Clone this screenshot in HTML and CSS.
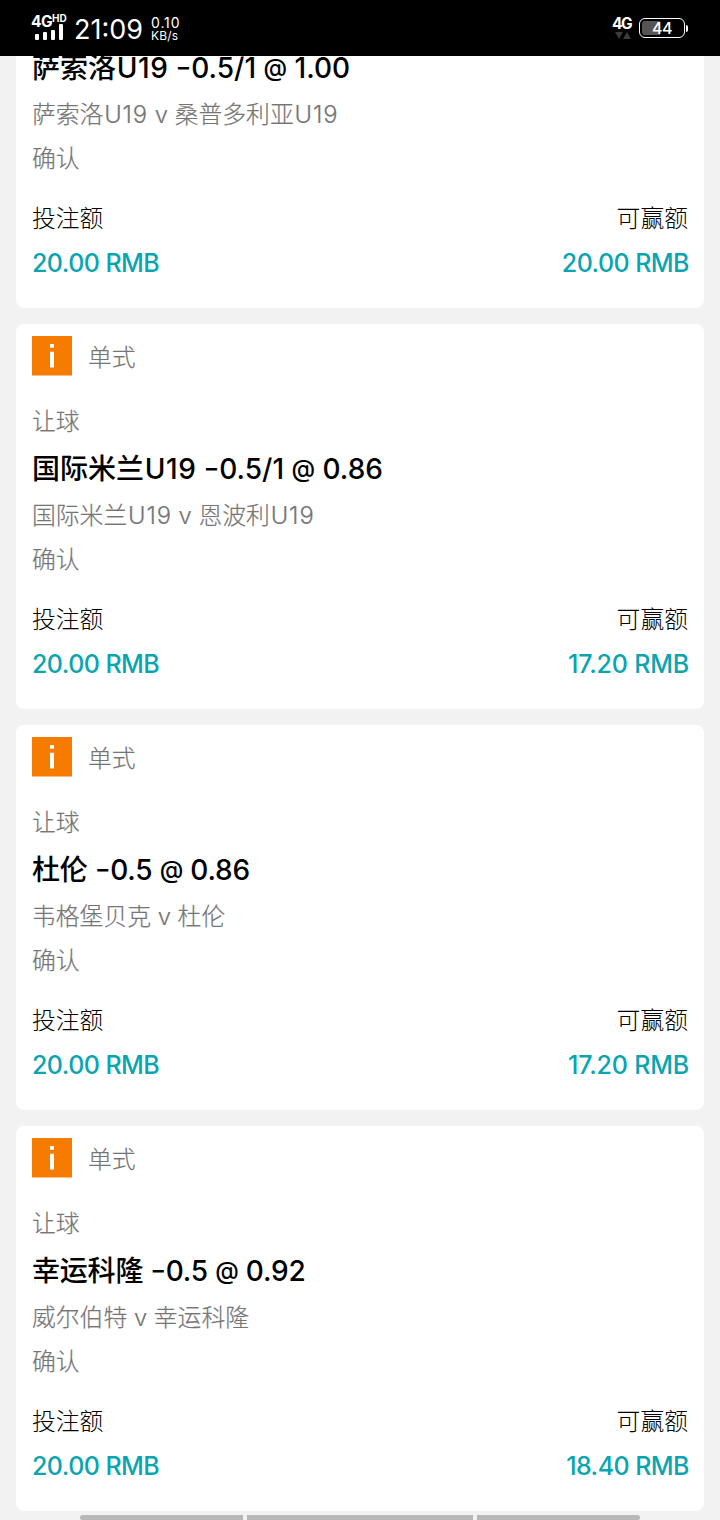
FILE: index.html
```html
<!DOCTYPE html>
<html lang="zh-CN">
<head>
<meta charset="utf-8">
<title>注单</title>
<link rel="stylesheet" href="styles.css">
</head>
<body>
<header class="status">
  <div class="signal">
    <div class="net"><span>4G</span><span class="hd">HD</span></div>
    <svg class="bars" width="29" height="17" viewBox="0 0 29 17"><g fill="#fff"><rect x="0" y="11" width="4" height="6" rx="1"/><rect x="8" y="9" width="4" height="8" rx="1"/><rect x="16" y="7" width="4" height="10" rx="1"/><rect x="24" y="1" width="4" height="16" rx="1"/></g></svg>
  </div>
  <div class="clock">21:09</div>
  <div class="speed"><span class="rate">0.10</span><span class="unit">KB/s</span></div>
  <div class="sim"><span>4G</span><svg width="16" height="8" viewBox="0 0 16 8"><path d="M0 0H8L4 7ZM8 7L12 0L16 7Z" fill="#3c3c3c"/></svg></div>
  <div class="battery"><div class="case"><div class="level">44</div></div><div class="cap"></div></div>
</header>
<main class="list">
  <section class="card card-cut">
    <h2 class="pick wide">萨索洛<span class="team">U19</span> <span class="minus">−</span>0.5/1 <span class="at">@</span> 1.00</h2>
    <p class="match">萨索洛<span class="team">U19</span> v 桑普多利亚<span class="team">U19</span></p>
    <p class="state">确认</p>
    <div class="labels"><span>投注额</span><span>可赢额</span></div>
    <div class="amounts"><span>20.00 RMB</span><span>20.00 RMB</span></div>
  </section>
  <section class="card">
    <div class="head"><svg class="info" width="40" height="40" viewBox="0 0 40 40"><path d="M0 0H40V39.5H0Z" fill="#f57c00"/><path d="M18 8H22V11.7H18ZM18 15.8H22V31.5H18Z" fill="#fff"/></svg><span>单式</span></div>
    <p class="type">让球</p>
    <h2 class="pick wide">国际米兰<span class="team">U19</span> <span class="minus">−</span>0.5/1 <span class="at">@</span> 0.86</h2>
    <p class="match">国际米兰<span class="team">U19</span> v 恩波利<span class="team">U19</span></p>
    <p class="state">确认</p>
    <div class="labels"><span>投注额</span><span>可赢额</span></div>
    <div class="amounts"><span>20.00 RMB</span><span class="loose">17.20 RMB</span></div>
  </section>
  <section class="card">
    <div class="head"><svg class="info" width="40" height="40" viewBox="0 0 40 40"><path d="M0 0H40V39.5H0Z" fill="#f57c00"/><path d="M18 8H22V11.7H18ZM18 15.8H22V31.5H18Z" fill="#fff"/></svg><span>单式</span></div>
    <p class="type">让球</p>
    <h2 class="pick">杜伦 <span class="minus">−</span>0.5 <span class="at">@</span> 0.86</h2>
    <p class="match">韦格堡贝克 v 杜伦</p>
    <p class="state">确认</p>
    <div class="labels"><span>投注额</span><span>可赢额</span></div>
    <div class="amounts"><span>20.00 RMB</span><span class="loose">17.20 RMB</span></div>
  </section>
  <section class="card">
    <div class="head"><svg class="info" width="40" height="40" viewBox="0 0 40 40"><path d="M0 0H40V39.5H0Z" fill="#f57c00"/><path d="M18 8H22V11.7H18ZM18 15.8H22V31.5H18Z" fill="#fff"/></svg><span>单式</span></div>
    <p class="type">让球</p>
    <h2 class="pick">幸运科隆 <span class="minus">−</span>0.5 <span class="at">@</span> 0.92</h2>
    <p class="match">威尔伯特 v 幸运科隆</p>
    <p class="state">确认</p>
    <div class="labels"><span>投注额</span><span>可赢额</span></div>
    <div class="amounts"><span>20.00 RMB</span><span>18.40 RMB</span></div>
  </section>
  <div class="navhint"><i></i><i></i><i></i></div>
</main>
</body>
</html>
```
FILE: styles.css
```css
* { box-sizing: border-box; }
body {
  margin: 0;
  height: 1520px;
  overflow: hidden;
  background: #f2f2f2;
  font-family: Inter, "Noto Sans CJK SC", sans-serif;
  font-size: 23.8px;
  font-weight: 300;
  color: #757575;
}
h2, p { margin: 0; white-space: pre; }

.status {
  display: flex;
  height: 56px;
  padding: 0 32px;
  background: #000;
  color: #fff;
}
.signal { width: 42px; padding-top: 14px; }
.net { display: flex; height: 9px; margin-left: -1px; font-size: 15.5px; font-weight: 700; line-height: 15px; letter-spacing: -0.6px; }
.hd { font-size: 10px; line-height: 9px; letter-spacing: 0; }
.bars { display: block; margin: 0 0 0 3px; }
.clock { width: 77px; padding-top: 12px; font-size: 27px; font-weight: 400; line-height: 36px; }
.speed { display: flex; flex-direction: column; padding-top: 15px; font-weight: 400; }
.rate { font-size: 14px; line-height: 15px; letter-spacing: 0.9px; }
.unit { font-size: 12px; line-height: 11px; letter-spacing: 0.2px; }
.sim { display: flex; flex-direction: column; width: 27px; margin-left: auto; padding-top: 15px; font-size: 15.5px; font-weight: 700; line-height: 17px; letter-spacing: -1.4px; }
.sim svg { margin-left: 3px; }
.battery { display: flex; align-items: center; width: 49px; height: 20px; margin-top: 18px; }
.case { width: 46px; height: 20px; padding: 2px; border: 1px solid #fff; border-radius: 6px; }
.level {
  height: 14px;
  border-radius: 3px;
  background: linear-gradient(90deg, #555 44%, transparent 44%);
  font-size: 16px;
  font-weight: 500;
  line-height: 15px;
  letter-spacing: -0.5px;
  text-align: center;
}
.cap { width: 2px; height: 7px; margin-left: 1px; border-radius: 0 2px 2px 0; background: #fff; }

.list { display: flex; flex-direction: column; gap: 16px; height: 1464px; overflow: hidden; }
.card { flex: none; height: 385px; margin: 0 16px; padding: 12px 16px 0; border-radius: 8px; background: #fff; }
.card-cut { height: 252px; padding-top: 0; border-radius: 0 0 8px 8px; }
.card-cut .pick { margin-top: -12px; }
.head { display: flex; gap: 16px; height: 40px; line-height: 44px; }
.info { margin-top: -0.5px; }
.head, .type, .match, .state { -webkit-text-stroke: 0.2px #757575; }
.type { height: 44px; margin-top: 24px; line-height: 44px; }
.pick { height: 48px; margin-top: 1px; font-size: 28px; font-weight: 500; line-height: 48px; letter-spacing: -0.2px; color: #000; }
.wide { letter-spacing: 0; }
.team { margin-left: 0.8px; letter-spacing: 0.5px; }
.minus { font-size: 23px; font-weight: 600; line-height: 1; vertical-align: 3px; }
.at { font-size: 24px; line-height: 1; vertical-align: 2px; }
.match { height: 46px; line-height: 46px; }
.match .team { letter-spacing: 0.9px; }
.state { height: 42px; line-height: 42px; }
.labels { display: flex; justify-content: space-between; margin-top: 18px; line-height: 42px; color: #000; }
.amounts { display: flex; justify-content: space-between; font-size: 25px; font-weight: 500; line-height: 46px; letter-spacing: -0.55px; color: #0aa5b0; }
.amounts span:last-child { margin-right: -1px; }
.amounts .loose { letter-spacing: -0.2px; }

.navhint { display: grid; flex: none; grid-template-columns: 163px 226px 163px; gap: 4px; width: 560px; height: 5px; margin: -12px auto 0; }
.navhint i { background: #b8b8b8; }
.navhint i:first-child { border-radius: 3px 0 0 3px; }
.navhint i:last-child { border-radius: 0 3px 3px 0; }
```
